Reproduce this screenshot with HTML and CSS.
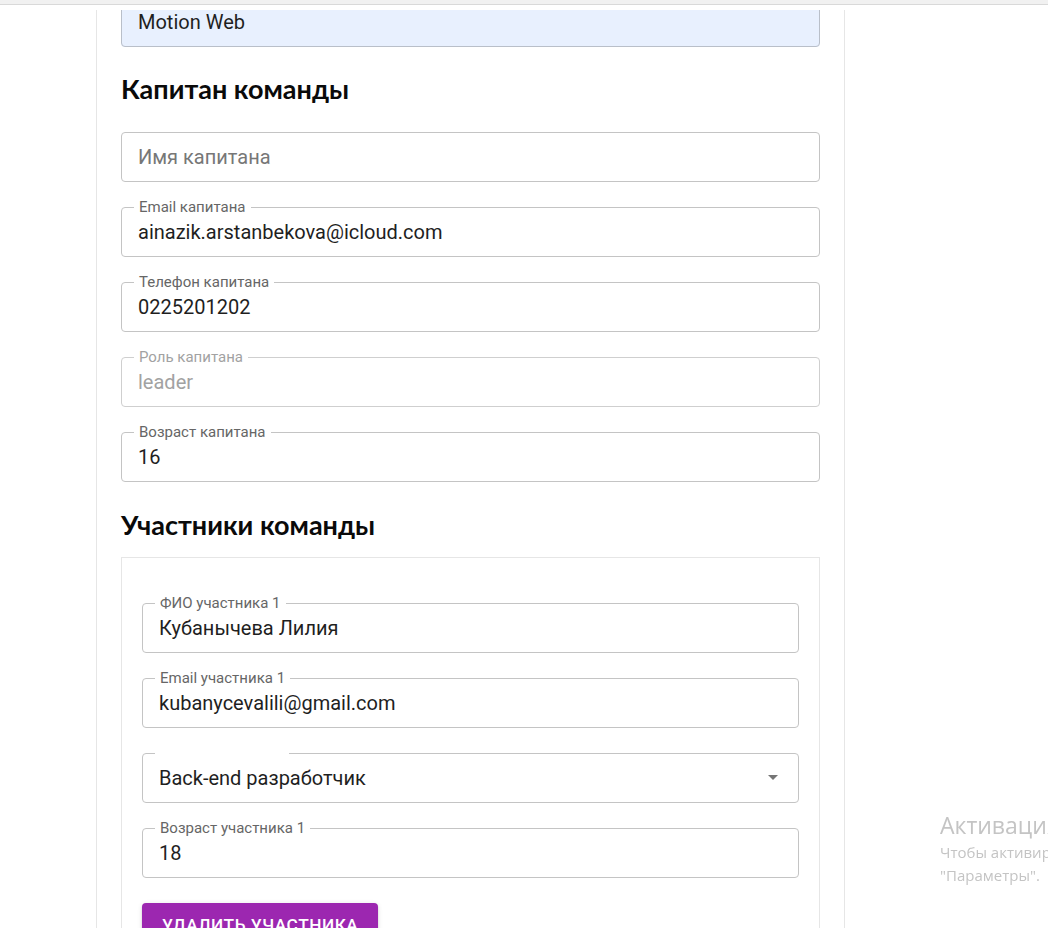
FILE: index.html
```html
<!DOCTYPE html>
<html lang="ru">
<head>
<meta charset="utf-8">
<title>Регистрация команды</title>
<link rel="stylesheet" href="styles.css">
</head>
<body>
<div class="topbar"><div class="topbar-strip"></div></div>
<div class="viewport">
  <main class="card">
    <fieldset class="field autofill">
      <legend class="hidden-legend"><span>Название команды</span></legend>
      <div class="value">Motion Web</div>
    </fieldset>

    <h2 class="section-title">Капитан команды</h2>

    <fieldset class="field">
      <legend class="empty-legend">&nbsp;</legend>
      <div class="value placeholder">Имя капитана</div>
    </fieldset>
    <fieldset class="field">
      <legend>Email капитана</legend>
      <div class="value">ainazik.arstanbekova@icloud.com</div>
    </fieldset>
    <fieldset class="field">
      <legend>Телефон капитана</legend>
      <div class="value">0225201202</div>
    </fieldset>
    <fieldset class="field disabled">
      <legend>Роль капитана</legend>
      <div class="value">leader</div>
    </fieldset>
    <fieldset class="field">
      <legend>Возраст капитана</legend>
      <div class="value">16</div>
    </fieldset>

    <h2 class="section-title second">Участники команды</h2>

    <section class="members">
      <fieldset class="field">
        <legend>ФИО участника 1</legend>
        <div class="value">Кубанычева Лилия</div>
      </fieldset>
      <fieldset class="field">
        <legend>Email участника 1</legend>
        <div class="value">kubanycevalili@gmail.com</div>
      </fieldset>
      <fieldset class="field select">
        <legend class="notch-legend"><span>Роль участника 1</span></legend>
        <div class="value">Back-end разработчик</div>
        <svg class="arrow" width="24" height="24" viewBox="0 0 24 24" aria-hidden="true"><path d="M7 10l5 5 5-5z" fill="#757575"/></svg>
      </fieldset>
      <fieldset class="field">
        <legend>Возраст участника 1</legend>
        <div class="value">18</div>
      </fieldset>
      <button class="danger-btn" type="button">Удалить участника</button>
    </section>
  </main>
</div>

<div class="watermark">
  <div class="wm-title">Активация Windows</div>
  <div class="wm-text">Чтобы активировать Windows, перейдите в раздел</div>
  <div class="wm-text">"Параметры".</div>
</div>
</body>
</html>
```

FILE: styles.css
```css
html, body {
  margin: 0;
  padding: 0;
  height: 100%;
  overflow: hidden;
  background: #ffffff;
  font-family: Roboto, "Liberation Sans", Arial, sans-serif;
}

.topbar {
  height: 10px;
  background: #ffffff;
}
.topbar-strip {
  height: 4px;
  background: #f1f1f1;
  border-bottom: 1px solid #d9d9d9;
}

.viewport {
  height: 918px;
  overflow: hidden;
}

.card {
  width: 699px;
  margin: -20px 0 0 96px;
  padding: 0 24px 40px;
  border-left: 1px solid #e6e6e6;
  border-right: 1px solid #e6e6e6;
  background: #ffffff;
}

.field {
  position: relative;
  margin: 0 0 18px 0;
  padding: 6px 16px 12px 16px;
  border: 1px solid #c4c4c4;
  border-radius: 4px;
  min-width: 0;
}
.field legend {
  margin-left: -4px;
  padding: 0 5px;
  font-size: 15px;
  line-height: 14px;
  height: 14px;
  color: #666666;
  white-space: nowrap;
}
.field .empty-legend {
  width: 0;
  padding: 0;
  overflow: hidden;
}
.field .hidden-legend span,
.field .notch-legend span {
  visibility: hidden;
}
.field .notch-legend {
  width: 124px;
  overflow: hidden;
}
.value {
  font-size: 20px;
  line-height: 24px;
  height: 24px;
  color: #1f1f1f;
  white-space: nowrap;
}
.value.placeholder {
  color: #777777;
}
.field.disabled legend,
.field.disabled .value {
  color: #a2a2a2;
}
.field.disabled {
  border-color: #cfcfcf;
}

.autofill {
  background: #e8f0fe;
  border-color: #b9bfc9;
}

.section-title {
  margin: 27px 0 21px 0;
  font-family: Lato, "Open Sans", sans-serif;
  font-weight: 700;
  font-size: 27px;
  line-height: 30px;
  height: 30px;
  color: #0a0a0a;
}
.section-title.second {
  margin: 28px 0 17px 0;
}

.members {
  border: 1px solid #e6e6e6;
  padding: 38px 20px 20px 20px;
}

.select .arrow {
  position: absolute;
  right: 13px;
  top: 5px;
}

.danger-btn {
  display: block;
  margin-top: 25px;
  height: 44px;
  padding: 0 20px;
  border: none;
  border-radius: 4px;
  background: #9c27b0;
  color: #ffffff;
  font-family: Roboto, "Liberation Sans", sans-serif;
  font-weight: 500;
  font-size: 17.3px;
  letter-spacing: 0.5px;
  text-transform: uppercase;
  box-shadow: 0 3px 1px -2px rgba(0,0,0,0.2), 0 2px 2px 0 rgba(0,0,0,0.14), 0 1px 5px 0 rgba(0,0,0,0.12);
}

.watermark {
  position: fixed;
  left: 940px;
  top: 809px;
  white-space: nowrap;
  font-family: "Open Sans", "Noto Sans", sans-serif;
  color: #c4c4c4;
  pointer-events: none;
}
.wm-title {
  font-size: 23px;
  line-height: 32px;
}
.wm-text {
  font-size: 15px;
  line-height: 23px;
}
```
